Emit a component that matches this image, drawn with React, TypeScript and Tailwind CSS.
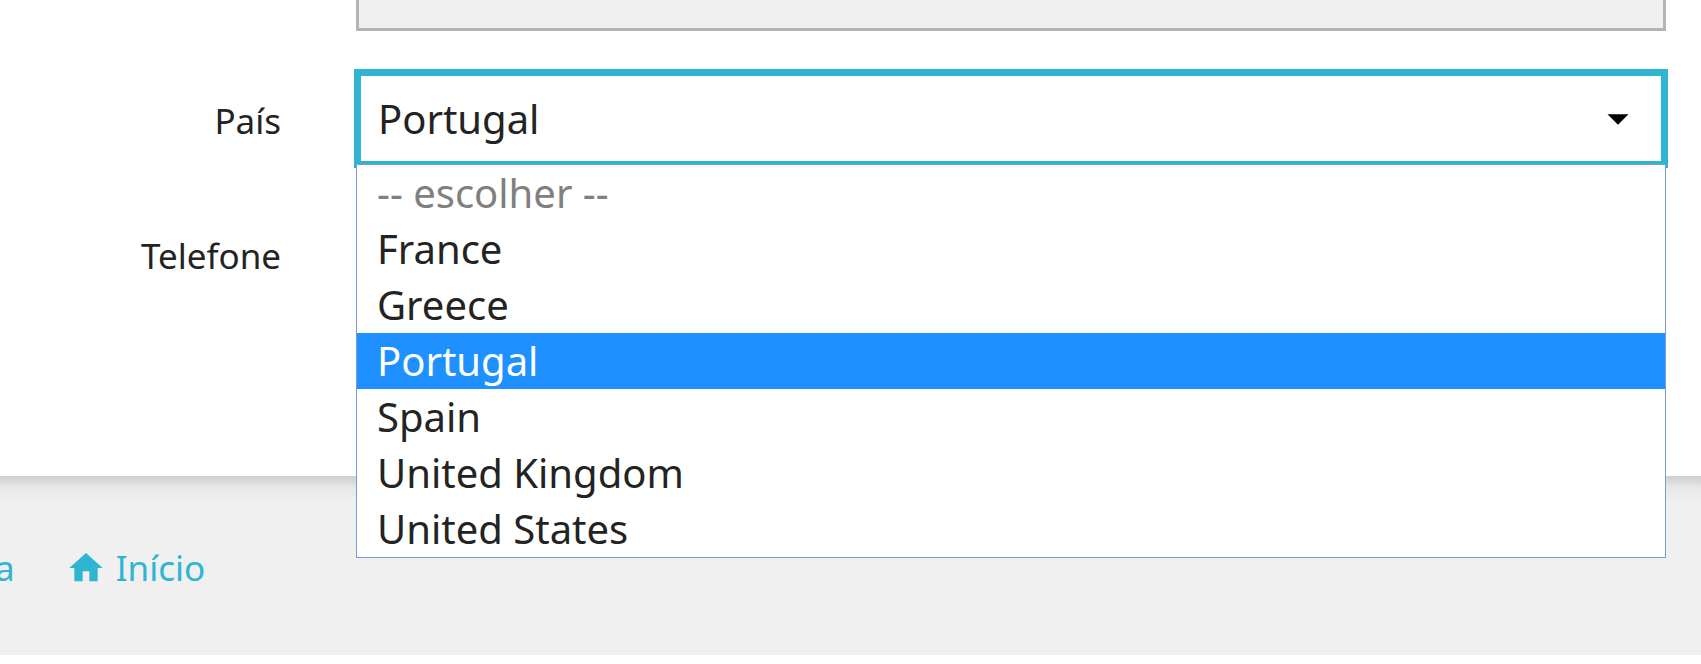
import { useState } from "react";
import { MdHome } from "react-icons/md";

const countries = [
  { value: "", label: "-- escolher --" },
  { value: "FR", label: "France" },
  { value: "GR", label: "Greece" },
  { value: "PT", label: "Portugal" },
  { value: "ES", label: "Spain" },
  { value: "GB", label: "United Kingdom" },
  { value: "US", label: "United States" },
];

function optionColor(value: string, selected: boolean) {
  if (selected) return "bg-[#1e90ff] text-white";
  return value === "" ? "text-[#808080]" : "text-[#232323]";
}

export default function App() {
  const [country, setCountry] = useState("PT");

  return (
    <div className="overflow-hidden bg-white pb-[9px] font-['Noto_Sans',sans-serif] text-[35px] text-[#232323]">
      <form className="grid grid-cols-[281px_1fr] items-center gap-x-[75px] gap-y-10 pr-[35px] pb-[175px]">
        <div className="col-start-2 h-[31px] border-[3px] border-t-0 border-[#b4b4b4] bg-[#f0f0f0]" />

        <label htmlFor="country" className="pt-1.5 text-right">
          País
        </label>
        <div className="relative">
          <select
            id="country"
            value={country}
            onChange={(e) => setCountry(e.target.value)}
            className="block h-[95px] w-full appearance-none border-[5px] border-[#2fb5d2] bg-white pr-20 pl-[17px] text-[40px] ring-2 ring-[#2fb5d2] outline-none"
          >
            {countries.map((c) => (
              <option key={c.value} value={c.value}>
                {c.label}
              </option>
            ))}
          </select>
          <svg
            viewBox="0 0 22 11"
            aria-hidden="true"
            className="pointer-events-none absolute top-[43px] right-[37px] h-[11px] w-[22px]"
          >
            <path d="M0.5 0.3h21L11 10.8z" fill="#000" />
          </svg>
          <ul
            role="listbox"
            aria-label="País"
            className="absolute inset-x-0 top-[93px] z-10 border border-[#7a9bd3] bg-white text-[40px]/[56px]"
          >
            {countries.map((c) => (
              <li
                key={c.value}
                role="option"
                aria-selected={c.value === country}
                onClick={() => setCountry(c.value)}
                className={`h-14 px-5 ${optionColor(c.value, c.value === country)}`}
              >
                {c.label}
              </li>
            ))}
          </ul>
        </div>

        <label htmlFor="phone" className="pt-1.5 text-right">
          Telefone
        </label>
        <input
          id="phone"
          type="tel"
          className="h-[95px] w-full border-[3px] border-[#b4b4b4] bg-[#f0f0f0] px-5"
        />
      </form>

      <footer className="flex h-[179px] items-start gap-[51px] bg-[#f0f0f0] bg-linear-to-b from-[#cecece] via-[#e8e8e8] via-[12px] to-[#f0f0f0] to-[28px] pt-[67px] text-[#2fb5d2]">
        <a href="#conta" className="-ml-[5px] leading-[50px]">
          a
        </a>
        <a href="#inicio" className="flex items-center gap-2.5 leading-[50px]">
          <MdHome className="size-10" aria-hidden="true" />
          Início
        </a>
      </footer>
    </div>
  );
}
